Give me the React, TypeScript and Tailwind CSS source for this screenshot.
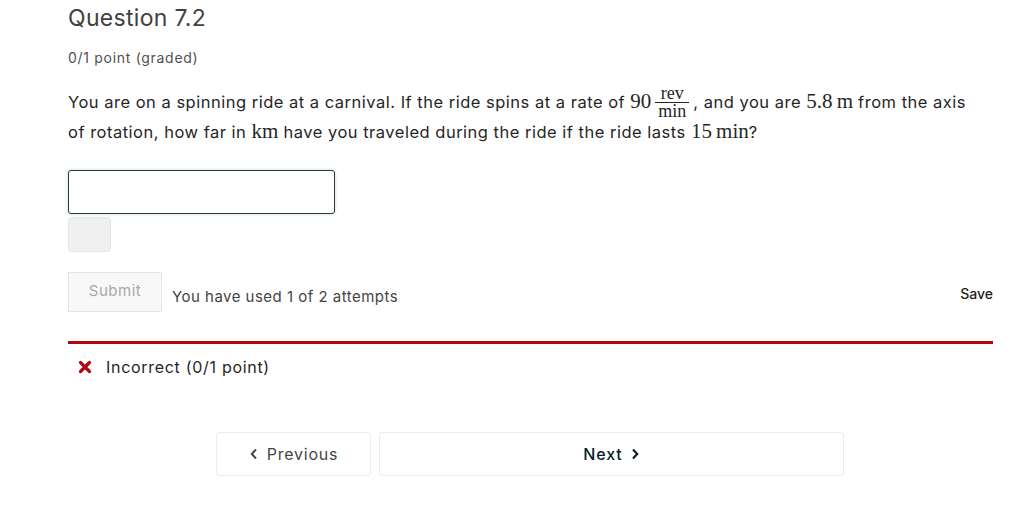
import React from "react";

const serif = { fontFamily: '"Liberation Serif", "DejaVu Serif", serif' };

function Frac() {
  return (
    <span
      className="inline-flex flex-col items-center align-middle mx-[4px] my-[-6px] leading-none relative top-[-2px] tracking-normal"
      style={serif}
    >
      <span className="text-[18px] px-[3px] pb-[1px] leading-[16px]">rev</span>
      <span className="block w-full h-px bg-[#222]"></span>
      <span className="text-[18px] px-[3px] leading-[16px]">min</span>
    </span>
  );
}

function M({ children }: { children: React.ReactNode }) {
  return (
    <span className="text-[21px] tracking-normal" style={serif}>
      {children}
    </span>
  );
}

export default function App() {
  return (
    <div className="w-[1024px] h-[507px] bg-white text-[#222]" style={{ fontFamily: 'Inter, "Liberation Sans", sans-serif' }}>
      <div className="pl-[68px] pr-[31px] pt-[4px]">
        <h1 className="text-[23px] font-normal text-[#414141] leading-[28px] tracking-[0.3px]">Question 7.2</h1>
        <div className="mt-[17px] text-[14px] text-[#505050] leading-[18px] tracking-[0.7px]">0/1 point (graded)</div>
        <p className="mt-[20px] mr-[16px] text-[16.5px] leading-[29px] text-[#262626] tracking-[0.5px]">
          You are on a spinning ride at a carnival. If the ride spins at a rate of <M>90</M>
          <Frac />, and you are <M>5.8&thinsp;m</M> from the axis of rotation, how far in <M>km</M> have you
          traveled during the ride if the ride lasts <M>15&thinsp;min</M>?
        </p>
        <div className="mt-[23px] w-[267px] h-[44px] border border-[#333] rounded-[3px] shadow-[0_0_3px_1px_#d6ecf5]"></div>
        <div className="mt-[3px] w-[43px] h-[35px] bg-[#f0f0f0] border border-[#e6e6e6] rounded-[4px]"></div>
        <div className="mt-[20px] flex items-center">
          <div className="w-[94px] h-[40px] bg-[#f8f8f8] border border-[#e6e6e6] flex items-center justify-center text-[15px] text-[#a8a8a8] pb-[1px] tracking-[0.5px]">
            Submit
          </div>
          <div className="ml-[10px] mt-[10px] text-[15px] text-[#454545] tracking-[0.48px]">You have used 1 of 2 attempts</div>
          <div className="ml-auto mt-[2px] text-[14px] text-[#222] font-medium">Save</div>
        </div>
        <div className="mt-[29px] h-[3px] bg-[#b20610]"></div>
        <div className="mt-[11px] flex items-center pl-[10px]">
          <svg width="14" height="14" viewBox="0 0 14 14">
            <path d="M2.5 2.5 L11.5 11.5 M11.5 2.5 L2.5 11.5" stroke="#b20610" strokeWidth="3.2" strokeLinecap="round" />
          </svg>
          <span className="ml-[14px] text-[16px] text-[#262626] tracking-[0.7px]">Incorrect (0/1 point)</span>
        </div>
        <div className="mt-[53px] flex pl-[148px] gap-[8px]">
          <div className="w-[155px] h-[44px] border border-[#ececec] rounded-[3px] flex items-center justify-center text-[16px] text-[#454545] tracking-[0.75px]">
            <svg width="10" height="12" viewBox="0 0 10 12" className="mr-[8px]">
              <path d="M7 1.5 L2.8 6 L7 10.5" stroke="#454545" strokeWidth="2" fill="none" />
            </svg>
            Previous
          </div>
          <div className="w-[465px] h-[44px] border border-[#ececec] rounded-[3px] flex items-center justify-center text-[16px] text-[#0a1e2a] font-medium tracking-[0.9px]">
            Next
            <svg width="10" height="12" viewBox="0 0 10 12" className="ml-[7px]">
              <path d="M3 1.5 L7.2 6 L3 10.5" stroke="#0a1e2a" strokeWidth="2.2" fill="none" />
            </svg>
          </div>
        </div>
      </div>
    </div>
  );
}
